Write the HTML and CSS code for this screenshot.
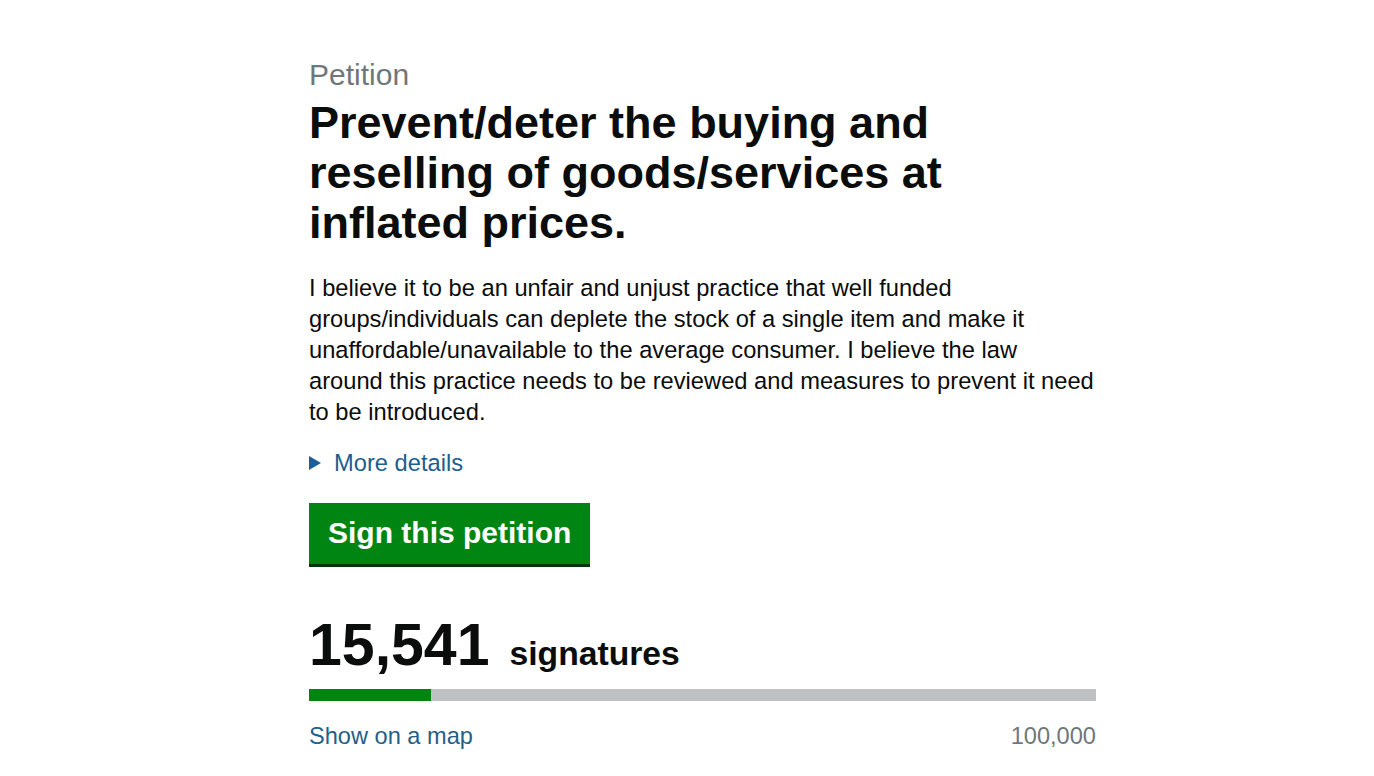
FILE: index.html
```html
<!DOCTYPE html>
<html lang="en">
<head>
<meta charset="utf-8">
<title>Petition</title>
<link rel="stylesheet" href="styles.css">
</head>
<body>
<main class="page">
  <div class="column">
    <span class="caption">Petition</span>
    <h1 class="title">Prevent/deter the buying and reselling of goods/services at inflated prices.</h1>
    <p class="lede">I believe it to be an unfair and unjust practice that well funded groups/individuals can deplete the stock of a single item and make it unaffordable/unavailable to the average consumer. I believe the law around this practice needs to be reviewed and measures to prevent it need to be introduced.</p>
    <div class="details"><span class="arrow"></span><span class="details-link">More details</span></div>
    <a class="button" href="#">Sign this petition</a>
    <div class="count"><span class="count-num">15,541</span><span class="count-label">signatures</span></div>
    <div class="bar"><div class="bar-fill" style="width:15.5%"></div></div>
    <div class="bar-foot"><a class="map-link" href="#">Show on a map</a><span class="target">100,000</span></div>
  </div>
</main>
</body>
</html>
```
FILE: styles.css
```css
html, body { margin: 0; padding: 0; background: #fff; }
body { font-family: "Liberation Sans", Arial, sans-serif; color: #0b0c0c; }
.page { display: flex; justify-content: center; }
.column { width: 787px; margin-left: 31px; padding-top: 59px; }
.caption { display: block; color: #6f777b; font-size: 30px; line-height: 32px; }
.title { margin: 7px 0 0; font-size: 45px; line-height: 50px; font-weight: 700; }
.lede { margin: 25px 0 0; font-size: 23.7px; line-height: 31px; }
.details { margin-top: 20px; display: flex; align-items: center; color: #1d5e8f; font-size: 23.7px; line-height: 30px; }
.arrow { width: 0; height: 0; border-left: 12px solid #1a5f9c; border-top: 7px solid transparent; border-bottom: 7px solid transparent; margin-right: 13px; }
.button { display: inline-block; margin-top: 25px; background: #008513; color: #fff; font-weight: 700; font-size: 30px; line-height: 36px; padding: 12px 19px 13px; text-decoration: none; box-shadow: 0 3px 0 #00360c; }
.count { margin-top: 49px; display: flex; align-items: baseline; }
.count-num { font-size: 59px; font-weight: 700; line-height: 64px; }
.count-label { font-size: 33.7px; font-weight: 700; margin-left: 20px; }
.bar { margin-top: 12px; height: 12px; background: #bfc1c3; }
.bar-fill { height: 100%; background: #008513; }
.bar-foot { margin-top: 20px; display: flex; justify-content: space-between; font-size: 23.6px; line-height: 30px; }
.map-link { color: #245f87; text-decoration: none; }
.target { color: #6f777b; }
```
